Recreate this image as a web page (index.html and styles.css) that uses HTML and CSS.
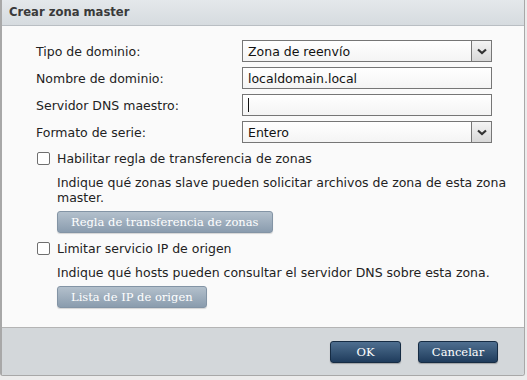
FILE: index.html
```html
<!DOCTYPE html>
<html lang="es">
<head>
    <meta charset="UTF-8">
    <meta name="viewport" content="width=device-width, initial-scale=1.0">
    <title>Crear zona master</title>
    <link rel="stylesheet" href="styles.css">
</head>
<body>
  <div class="dialog">
    <div class="dialog-header">Crear zona master</div>

    <div class="dialog-body">
        <div class="form-grid">
            <label>Tipo de dominio:</label>
            <div class="select">
                <span>Zona de reenvío</span>
                <span class="arrow"><svg width="10" height="7" viewBox="0 0 10 7"><path d="M1 1.5 L5 5 L9 1.5" fill="none" stroke="#333" stroke-width="2.2"/></svg></span>
            </div>

            <label>Nombre de dominio:</label>
            <div class="text-input">localdomain.local</div>

            <label>Servidor DNS maestro:</label>
            <div class="text-input"><span class="caret"></span></div>

            <label>Formato de serie:</label>
            <div class="select">
                <span>Entero</span>
                <span class="arrow"><svg width="10" height="7" viewBox="0 0 10 7"><path d="M1 1.5 L5 5 L9 1.5" fill="none" stroke="#333" stroke-width="2.2"/></svg></span>
            </div>
        </div>

        <div class="option">
            <div class="check-row"><span class="checkbox"></span>Habilitar regla de transferencia de zonas</div>
            <p class="hint">Indique qué zonas slave pueden solicitar archivos de zona de esta zona<br>master.</p>
            <button class="button-light">Regla de transferencia de zonas</button>
        </div>

        <div class="option">
            <div class="check-row"><span class="checkbox"></span>Limitar servicio IP de origen</div>
            <p class="hint">Indique qué hosts pueden consultar el servidor DNS sobre esta zona.</p>
            <button class="button-light">Lista de IP de origen</button>
        </div>
    </div>

    <div class="dialog-footer">
        <button class="button-dark ok">OK</button>
        <button class="button-dark">Cancelar</button>
    </div>
  </div>
</body>
</html>
```

FILE: styles.css
```css
body {
    margin: 0;
    background-color: #ececec;
    font-family: "DejaVu Sans", sans-serif;
    font-size: 12.5px;
    color: #222;
}
.dialog {
    width: 522px;
    height: 375px;
    border: 1px solid #a8a8a8;
    border-left-width: 2px;
    border-top: none;
    border-radius: 0 0 3px 3px;
    display: flex;
    flex-direction: column;
    background: #fafafa;
    overflow: hidden;
}
.dialog-header {
    height: 25px;
    line-height: 25px;
    padding-left: 7px;
    font-weight: bold;
    font-size: 11.6px;
    color: #3a3a3a;
    background: linear-gradient(#e4e8eb, #d6dbdf);
    border-bottom: 1px solid #b9bec3;
}
.dialog-body {
    flex-grow: 1;
    padding: 14px 18px 0 34px;
    border-bottom: 1px solid #b4b4b4;
}
.form-grid {
    display: grid;
    grid-template-columns: 206px 250px;
    row-gap: 5px;
    align-items: center;
}
.select, .text-input {
    border: 1px solid #767676;
    background: linear-gradient(#ffffff, #f4f4f4);
    display: flex;
    align-items: center;
    padding-left: 5px;
    box-sizing: border-box;
    height: 22px;
    color: #111;
}
.select span:first-child {
    flex-grow: 1;
}
.arrow {
    width: 19px;
    height: 20px;
    border-left: 1px solid #767676;
    background: linear-gradient(#f4f4f4, #d8d8d8);
    display: flex;
    align-items: center;
    justify-content: center;
}
.caret {
    width: 1px;
    height: 14px;
    background: #111;
}
.option {
    margin-top: 8px;
}
.check-row {
    display: flex;
    align-items: center;
    gap: 7px;
    padding-left: 1px;
}
.checkbox {
    width: 11px;
    height: 11px;
    border: 1px solid #6f6f6f;
    border-radius: 2px;
    background: #fff;
}
.hint {
    margin: 9px 0 0 21px;
    line-height: 15px;
    white-space: nowrap;
}
.button-light, .button-dark {
    font-family: "DejaVu Serif", serif;
    font-size: 11.5px;
    color: white;
    border-radius: 3px;
    cursor: pointer;
    height: 22px;
}
.button-light {
    margin: 6px 0 0 21px;
    padding: 0 13px;
    background: linear-gradient(#b3c0cc, #8a9cae);
    border: 1px solid #8394a5;
    box-shadow: 0 1px 1px rgba(0, 0, 0, 0.15);
}
.dialog-footer {
    height: 47px;
    background: #d3d7da;
    display: flex;
    justify-content: flex-end;
    align-items: center;
    gap: 17px;
    padding-right: 26px;
}
.button-dark {
    padding: 0 12px;
    background: linear-gradient(#4f6f90, #1f3c5c);
    border: 1px solid #162c44;
    box-shadow: 0 1px 1px rgba(0, 0, 0, 0.25);
}
.ok {
    width: 71px;
}
.dialog-footer .button-dark:last-child {
    width: 80px;
}
```
